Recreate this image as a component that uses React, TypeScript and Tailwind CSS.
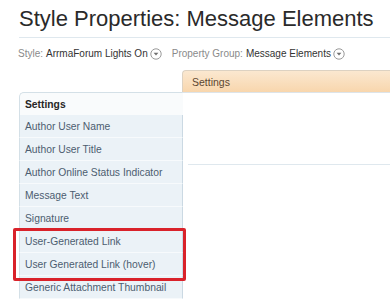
import React from "react";

function DownCircle() {
  return (
    <svg width="12" height="12" viewBox="0 0 12 12" className="inline-block shrink-0">
      <circle cx="6" cy="6" r="5.2" fill="#fff" stroke="#9a9a9a" strokeWidth="1" />
      <path d="M3.6 4.8 L8.4 4.8 L6 7.6 Z" fill="#6f6f6f" />
    </svg>
  );
}

export default function App() {
  const rows = [
    "Author User Name",
    "Author User Title",
    "Author Online Status Indicator",
    "Message Text",
    "Signature",
    "User-Generated Link",
    "User Generated Link (hover)",
    "Generic Attachment Thumbnail",
  ];

  return (
    <div
      className="relative w-[390px] h-[300px] overflow-hidden bg-white"
      style={{ fontFamily: '"Liberation Sans", Arial, sans-serif' }}
    >
      {/* Title */}
      <div className="ml-[19px] pt-[6px] pb-[5px] border-b border-[#dfe8ee]">
        <h1 className="text-[22px] leading-[26px] text-[#2a2a2a] whitespace-nowrap">
          Style Properties: Message Elements
        </h1>
      </div>

      {/* Style / property group selectors */}
      <div className="ml-[18px] mt-[9px] flex items-center text-[10px] leading-[14px] whitespace-nowrap">
        <span className="text-[#8a8a8a]">Style:</span>
        <span className="ml-[3px] text-[#333]">ArrmaForum Lights On</span>
        <span className="ml-[2px]"><DownCircle /></span>
        <span className="ml-[10px] text-[#8a8a8a]">Property Group:</span>
        <span className="ml-[3px] text-[#333]">Message Elements</span>
        <span className="ml-[2px]"><DownCircle /></span>
      </div>

      {/* Tab strip */}
      <div className="mt-[9px] ml-[182px] h-[22px] w-[230px] flex items-center rounded-tl-[4px] border-t border-l border-[#ddd2c2] bg-gradient-to-b from-[#fbe8d0] to-[#f8d6ad] pl-[9px] pt-[2px]">
        <span className="text-[10.5px] text-[#5c4631]">Settings</span>
      </div>

      <div className="flex">
        {/* Vertical tab list */}
        <div className="ml-[19px] w-[164px] shrink-0 text-[10.3px] whitespace-nowrap">
          <div className="h-[23px] flex items-center pl-[5px] pt-[2px] rounded-tl-[5px] border-t border-l border-[#d4e0e7] bg-[#f9fbfc] font-bold text-[#262626]">
            Settings
          </div>
          {rows.map((r) => (
            <div
              key={r}
              className="h-[23px] flex items-center pl-[5px] pt-[2px] border-l border-r border-b border-l-[#d4e0e7] border-r-[#cbd9e3] border-b-[#f7fafc] bg-[#ebf2f7] text-[#4c5d70]"
            >
              {r}
            </div>
          ))}
        </div>

        {/* Content area */}
        <div className="flex-1 border-t border-[#dde4e9] -ml-px">
          <div className="mt-[71px] ml-[6px] border-t border-[#dfe8ee]" />
        </div>
      </div>

      {/* Annotation highlight */}
      <div className="absolute left-[13px] top-[228px] w-[173px] h-[53px] border-[3px] border-[#d9222a] rounded-[2px]" />
    </div>
  );
}
